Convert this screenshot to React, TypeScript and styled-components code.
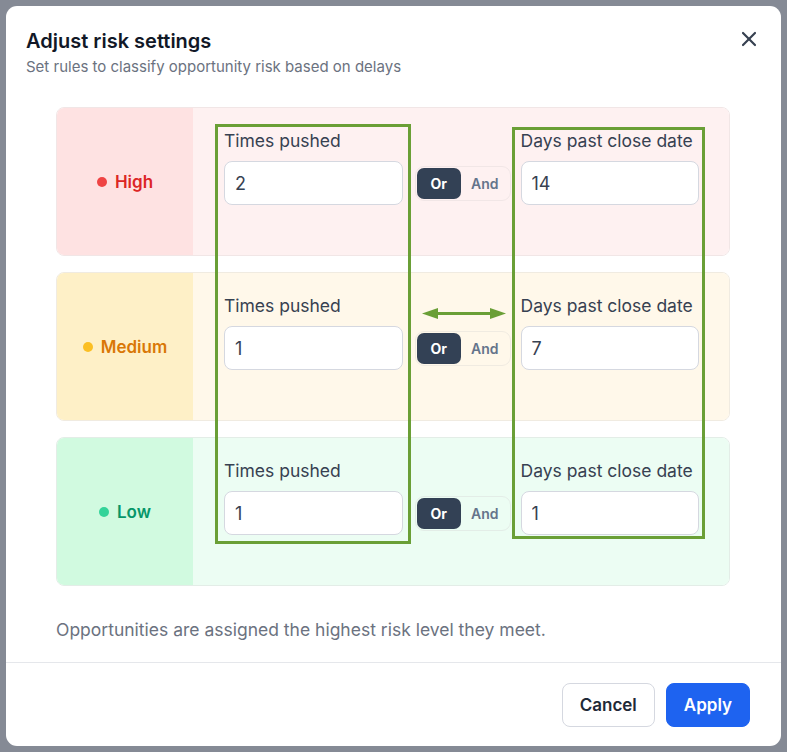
import React from 'react';
import styled, { createGlobalStyle } from 'styled-components';
import { X } from 'lucide-react';

const GlobalStyle = createGlobalStyle`
  * {
    box-sizing: border-box;
  }

  body {
    margin: 0;
    background: #858a95;
    font-family: Inter, "Noto Sans", sans-serif;
  }
`;

const Backdrop = styled.div`
  width: 787px;
  height: 752px;
  padding: 6px;
`;

const Dialog = styled.div`
  width: 775px;
  height: 740px;
  background: #ffffff;
  border-radius: 11px;
  display: flex;
  flex-direction: column;
  overflow: hidden;
`;

const Header = styled.div`
  display: flex;
  justify-content: space-between;
  align-items: flex-start;
  padding: 23px 20px 0 20px;
`;

const Title = styled.h2`
  margin: 0;
  font-size: 20px;
  line-height: 24px;
  font-weight: 600;
  color: #111827;
`;

const Subtitle = styled.p`
  margin: 4px 0 0;
  font-size: 15px;
  line-height: 20px;
  color: #6b7280;
`;

const CloseButton = styled.button`
  display: flex;
  padding: 0;
  margin-top: -2px;
  border: none;
  background: transparent;
  color: #374151;
  cursor: pointer;
`;

const Body = styled.div`
  padding: 30px 51px 0 50px;
`;

const Levels = styled.div`
  position: relative;
  display: flex;
  flex-direction: column;
  gap: 16px;
`;

const LevelCard = styled.div<{ $border: string }>`
  display: grid;
  grid-template-columns: 136px 1fr;
  height: 149px;
  border: 1px solid ${(props) => props.$border};
  border-radius: 8px;
  overflow: hidden;
`;

const LevelName = styled.div<{ $bg: string; $color: string }>`
  display: flex;
  align-items: center;
  justify-content: center;
  gap: 8px;
  background: ${(props) => props.$bg};
  color: ${(props) => props.$color};
  font-size: 17px;
  font-weight: 600;
`;

const Dot = styled.span<{ $color: string }>`
  width: 10px;
  height: 10px;
  border-radius: 50%;
  background: ${(props) => props.$color};
`;

const Rules = styled.div<{ $bg: string }>`
  padding: 23px 30px 0 31px;
  background: ${(props) => props.$bg};
`;

const RuleRow = styled.div`
  display: flex;
  align-items: flex-end;
  gap: 11px;
`;

const Field = styled.label`
  flex: 1;
  display: flex;
  flex-direction: column;
  gap: 10px;
`;

const FieldLabel = styled.span`
  font-size: 17.5px;
  line-height: 20px;
  color: #374151;
`;

const NumberInput = styled.input`
  width: 100%;
  height: 44px;
  padding: 0 10px;
  border: 1px solid #d5d8e0;
  border-radius: 8px;
  background: #ffffff;
  font-family: inherit;
  font-size: 18px;
  color: #374151;
  outline: none;
`;

const Toggle = styled.div<{ $border: string }>`
  display: flex;
  align-items: center;
  margin: 0 -1px 4px 1px;
  padding: 1px;
  border: 1px solid ${(props) => props.$border};
  border-radius: 9px;
`;

const ToggleOption = styled.button<{ $active?: boolean }>`
  height: 31px;
  padding: 0 ${(props) => (props.$active ? '14px' : '10px')};
  border: none;
  border-radius: 7px;
  background: ${(props) => (props.$active ? '#334155' : 'transparent')};
  color: ${(props) => (props.$active ? '#ffffff' : '#64748b')};
  font-family: inherit;
  font-size: 14px;
  font-weight: ${(props) => (props.$active ? 700 : 600)};
  cursor: pointer;
`;

/* review markup drawn over the level list */
const Highlight = styled.div<{ $left: number; $top: number; $width: number; $height: number }>`
  position: absolute;
  left: ${(props) => props.$left}px;
  top: ${(props) => props.$top}px;
  width: ${(props) => props.$width}px;
  height: ${(props) => props.$height}px;
  border: 3px solid #6a9f36;
  pointer-events: none;
`;

const ArrowMark = styled.svg`
  position: absolute;
  left: 366px;
  top: 200px;
  pointer-events: none;
`;

const Note = styled.p`
  margin: 32px 0 20px;
  font-size: 17.5px;
  line-height: 24px;
  color: #6b7280;
`;

const Footer = styled.div`
  display: flex;
  justify-content: flex-end;
  gap: 11px;
  padding: 20px 31px 0;
  border-top: 1px solid #e5e7eb;
`;

const Button = styled.button<{ $primary?: boolean }>`
  height: 44px;
  padding: 0 17px;
  border: 1px solid ${(props) => (props.$primary ? '#1e63f0' : '#d5d8e0')};
  border-radius: 8px;
  background: ${(props) => (props.$primary ? '#1e63f0' : '#ffffff')};
  color: ${(props) => (props.$primary ? '#ffffff' : '#1f2937')};
  font-family: inherit;
  font-size: 17px;
  font-weight: 600;
  cursor: pointer;
`;

interface RiskLevel {
  name: string;
  dot: string;
  text: string;
  labelBg: string;
  rulesBg: string;
  border: string;
  timesPushed: number;
  daysPast: number;
}

const levels: RiskLevel[] = [
  {
    name: 'High',
    dot: '#ef4444',
    text: '#dc2626',
    labelBg: '#fee2e2',
    rulesBg: '#fef1f1',
    border: '#f1e6e6',
    timesPushed: 2,
    daysPast: 14,
  },
  {
    name: 'Medium',
    dot: '#fbbf24',
    text: '#d97706',
    labelBg: '#fef0c7',
    rulesBg: '#fff8ea',
    border: '#f0ebe1',
    timesPushed: 1,
    daysPast: 7,
  },
  {
    name: 'Low',
    dot: '#34d399',
    text: '#059669',
    labelBg: '#d1fae0',
    rulesBg: '#ecfdf3',
    border: '#e3ede7',
    timesPushed: 1,
    daysPast: 1,
  },
];

function LevelRules({ level }: { level: RiskLevel }) {
  return (
    <LevelCard $border={level.border}>
      <LevelName $bg={level.labelBg} $color={level.text}>
        <Dot $color={level.dot} />
        {level.name}
      </LevelName>
      <Rules $bg={level.rulesBg}>
        <RuleRow>
          <Field>
            <FieldLabel>Times pushed</FieldLabel>
            <NumberInput type="text" defaultValue={level.timesPushed} />
          </Field>
          <Toggle $border={level.border}>
            <ToggleOption type="button" $active>
              Or
            </ToggleOption>
            <ToggleOption type="button">And</ToggleOption>
          </Toggle>
          <Field>
            <FieldLabel>Days past close date</FieldLabel>
            <NumberInput type="text" defaultValue={level.daysPast} />
          </Field>
        </RuleRow>
      </Rules>
    </LevelCard>
  );
}

export default function App() {
  return (
    <>
      <GlobalStyle />
      <Backdrop>
        <Dialog>
          <Header>
            <div>
              <Title>Adjust risk settings</Title>
              <Subtitle>Set rules to classify opportunity risk based on delays</Subtitle>
            </div>
            <CloseButton type="button" aria-label="Close">
              <X size={24} strokeWidth={2.2} />
            </CloseButton>
          </Header>

          <Body>
            <Levels>
              {levels.map((level) => (
                <LevelRules key={level.name} level={level} />
              ))}
              <Highlight $left={159} $top={17} $width={196} $height={420} />
              <Highlight $left={456} $top={20} $width={193} $height={412} />
              <ArrowMark width="84" height="13" viewBox="0 0 84 13">
                <line x1="12" y1="6.5" x2="72" y2="6.5" stroke="#6a9f36" strokeWidth="3" />
                <polygon points="0,6.5 16,1 16,12" fill="#6a9f36" />
                <polygon points="84,6.5 68,1 68,12" fill="#6a9f36" />
              </ArrowMark>
            </Levels>
            <Note>Opportunities are assigned the highest risk level they meet.</Note>
          </Body>

          <Footer>
            <Button type="button">Cancel</Button>
            <Button type="button" $primary>
              Apply
            </Button>
          </Footer>
        </Dialog>
      </Backdrop>
    </>
  );
}
